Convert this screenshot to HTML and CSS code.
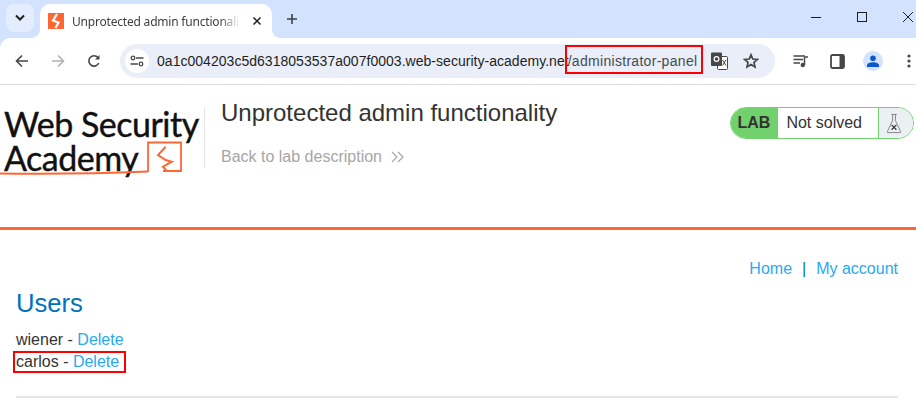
FILE: index.html
```html
<!DOCTYPE html>
<html>
<head>
  <meta charset="UTF-8" />
  <title>Unprotected admin functionality</title>
  <link rel="stylesheet" href="styles.css">
</head>
<body>

  <div class="tabstrip">
    <div class="tab-search">
      <svg width="12" height="8" viewBox="0 0 12 8"><path d="M2 1.500 6 5.500 10 1.500" fill="none" stroke="#1f1f1f" stroke-width="2"/></svg>
    </div>
    <div class="tab">
      <svg class="favicon" width="16" height="16" viewBox="0 0 16 16">
        <rect width="16" height="16" fill="#ff6633"/>
        <path d="M9 1 5 7.500 10.500 9.500 7.500 15" fill="none" stroke="#fff" stroke-width="2.200"/>
      </svg>
      <span class="tab-title">Unprotected admin functionality</span>
      <svg width="10" height="10" viewBox="0 0 10 10"><path d="M1.500 1.500 8.500 8.500M8.500 1.500 1.500 8.500" stroke="#1f1f1f" stroke-width="1.500"/></svg>
    </div>
    <svg class="new-tab" width="12" height="12" viewBox="0 0 12 12"><path d="M6 1V11M1 6H11" stroke="#3c4043" stroke-width="1.600"/></svg>
    <div class="window-buttons">
      <svg width="10" height="10" viewBox="0 0 10 10"><path d="M0 5.500H10" stroke="#1f1f1f"/></svg>
      <svg width="10" height="10" viewBox="0 0 10 10"><rect x="0.500" y="0.500" width="9" height="9" fill="none" stroke="#1f1f1f"/></svg>
      <svg width="10" height="10" viewBox="0 0 10 10"><path d="M0 0 10 10M10 0 0 10" stroke="#1f1f1f"/></svg>
    </div>
  </div>

  <div class="toolbar">
    <svg class="nav-icon" width="14" height="14" viewBox="0 0 14 14"><path d="M13 7H2M7 1.500 1.500 7 7 12.500" fill="none" stroke="#474747" stroke-width="1.600"/></svg>
    <svg class="nav-icon" width="14" height="14" viewBox="0 0 14 14"><path d="M1 7H12M7 1.500 12.500 7 7 12.500" fill="none" stroke="#b0b1b3" stroke-width="1.600"/></svg>
    <svg class="nav-icon" width="14" height="14" viewBox="0 0 14 14"><path d="M11.800 9A5.200 5.200 0 1 1 11 3.500" fill="none" stroke="#474747" stroke-width="1.600"/><path d="M12.500 1V5.500H8Z" fill="#474747"/></svg>

    <div class="omnibox">
      <span class="site-info">
        <svg width="14" height="12" viewBox="0 0 14 12"><circle cx="3" cy="3" r="1.800" fill="none" stroke="#474747" stroke-width="1.300"/><path d="M6 3H13.500M0.500 9H8" stroke="#474747" stroke-width="1.300"/><circle cx="11" cy="9" r="1.800" fill="none" stroke="#474747" stroke-width="1.300"/></svg>
      </span>
      <span class="url">0a1c004203c5d6318053537a007f0003.web-security-academy.net</span><span class="url-path">/administrator-panel</span>
      <svg class="translate" width="17" height="18" viewBox="0 0 17 18">
        <rect x="6.500" y="4.500" width="10" height="13" rx="1" fill="#fff" stroke="#474747"/>
        <rect x="0" y="0.500" width="11" height="13.500" rx="1" fill="#474747"/>
        <circle cx="5.500" cy="7" r="2.400" fill="none" stroke="#fff" stroke-width="1.200"/>
        <path d="M11.500 8 15 13.500M15 8 11.500 13.500" stroke="#474747"/>
      </svg>
      <svg class="star" width="16" height="16" viewBox="0 0 16 16"><path d="M8 1.800 9.800 6 14.500 6.400 11 9.400 12 14 8 11.600 4 14 5 9.400 1.500 6.400 6.200 6Z" fill="none" stroke="#474747" stroke-width="1.700"/></svg>
    </div>

    <div class="toolbar-right">
      <svg width="16" height="14" viewBox="0 0 16 14"><path d="M0.500 2H12M0.500 5.500H10M0.500 9H7" stroke="#474747" stroke-width="1.400"/><path d="M11.500 3V11" stroke="#474747" stroke-width="1.500"/><path d="M11.500 3H15" stroke="#474747" stroke-width="1.500"/><circle cx="9.800" cy="11" r="2.200" fill="#474747"/></svg>
      <svg width="15" height="15" viewBox="0 0 15 15"><rect x="1" y="1" width="13" height="13" rx="1.500" fill="none" stroke="#474747" stroke-width="1.800"/><rect x="9.500" y="1" width="4.500" height="13" fill="#474747"/></svg>
      <span class="avatar">
        <svg width="12" height="12" viewBox="0 0 12 12"><circle cx="6" cy="3.200" r="2.800" fill="#0b57d0"/><path d="M0 12V10.500C0 8.500 3 7.300 6 7.300S12 8.500 12 10.500V12Z" fill="#0b57d0"/></svg>
      </span>
      <svg width="4" height="14" viewBox="0 0 4 14"><circle cx="2" cy="2" r="1.600" fill="#474747"/><circle cx="2" cy="7" r="1.600" fill="#474747"/><circle cx="2" cy="12" r="1.600" fill="#474747"/></svg>
    </div>
  </div>

  <div class="lab-header">
    <div class="logo">
      <div class="logo-line">Web Security</div>
      <div class="logo-line">Academy</div>
      <svg class="logo-mark" width="200" height="36" viewBox="0 0 200 36">
        <path d="M0 33.500C40 34 100 33.500 148 31.500" fill="none" stroke="#ff6633" stroke-width="1.800"/>
        <path d="M148 32V2.500H181V31H163" fill="none" stroke="#ff6633" stroke-width="1.800"/>
        <path d="M165.700 6.700 158 15 165.700 20 171.700 21.700 163 26.700 166.700 31" fill="none" stroke="#ff6633" stroke-width="2"/>
      </svg>
    </div>
    <div class="lab-title">
      <h2>Unprotected admin functionality</h2>
      <a class="back-link" href="#">Back to lab description
        <svg width="13" height="12" viewBox="0 0 13 12"><path d="M1 1 6 6 1 11M7 1 12 6 7 11" fill="none" stroke="#a6a6a6" stroke-width="1.200"/></svg>
      </a>
    </div>
    <div class="lab-status">
      <span class="lab-label">LAB</span>
      <span class="lab-state">Not solved</span>
      <span class="lab-flask">
        <svg width="16" height="21" viewBox="0 0 16 22"><path d="M5 1.500H11M6.500 1.500V8L1 19.500C0.800 20 1 20.500 1.700 20.500H14.300C15 20.500 15.200 20 15 19.500L9.500 8V1.500" fill="none" stroke="#777" stroke-width="0.900"/><path d="M5.500 12.500 10.500 17.500M10.500 12.500 5.500 17.500" stroke="#333" stroke-width="1.300"/></svg>
      </span>
    </div>
  </div>

  <div class="content">
    <div class="top-links">
      <a href="#">Home</a><span class="sep">|</span><a href="#">My account</a>
    </div>
    <h1>Users</h1>
    <div class="user-row"><span>wiener - </span><a href="#">Delete</a></div>
    <div class="user-row marked"><span>carlos - </span><a href="#">Delete</a></div>
    <hr>
  </div>

</body>
</html>
```

FILE: styles.css
```css
html, body {
  margin: 0;
  height: 410px;
  overflow: hidden;
  background-color: white;
  font-family: "Liberation Sans", Arial, sans-serif;
  color: #333332;
}

a {
  color: #29a9f0;
  text-decoration: none;
}

/* browser chrome */
.tabstrip {
  display: flex;
  align-items: flex-end;
  height: 38px;
  background-color: #d3e3fd;
  box-sizing: border-box;
}

.tab-search {
  display: flex;
  align-items: center;
  justify-content: center;
  width: 28px;
  height: 28px;
  margin: 0 0 6px 6px;
  border-radius: 8px;
  background-color: #e4edfd;
}

.tab {
  position: relative;
  display: flex;
  align-items: center;
  width: 232px;
  height: 34px;
  margin-left: 6px;
  padding: 0 10px 0 8px;
  box-sizing: border-box;
  border-radius: 10px 10px 0 0;
  background-color: white;
}

.tab::before,
.tab::after {
  content: "";
  position: absolute;
  bottom: 0;
  width: 8px;
  height: 8px;
}

.tab::before {
  right: 100%;
  background: radial-gradient(circle at 0 0, transparent 7.500px, white 8px);
}

.tab::after {
  left: 100%;
  background: radial-gradient(circle at 100% 0, transparent 7.500px, white 8px);
}

.favicon {
  flex: none;
}

.tab-title {
  flex: 1;
  margin: 0 12px 0 8px;
  overflow: hidden;
  white-space: nowrap;
  font-family: "Noto Sans", "Liberation Sans", sans-serif;
  font-size: 12px;
  letter-spacing: -0.2px;
  color: #3c4043;
  -webkit-mask-image: linear-gradient(to right, black 88%, transparent);
  mask-image: linear-gradient(to right, black 88%, transparent);
}

.new-tab {
  margin: 0 0 13px 14px;
}

.window-buttons {
  display: flex;
  gap: 36px;
  margin: 0 3px 16px auto;
}

.toolbar {
  position: relative;
  display: flex;
  align-items: center;
  height: 47px;
  box-sizing: border-box;
  padding: 0 9px 0 15px;
  background-color: white;
  border-bottom: 1px solid #dcdcdc;
}

.toolbar::before {
  content: "";
  position: absolute;
  left: 0;
  top: 0;
  width: 10px;
  height: 10px;
  background: radial-gradient(circle at 100% 100%, transparent 9.500px, #d3e3fd 10px);
}

.nav-icon {
  flex: none;
  margin-right: 22px;
}

.nav-icon:nth-of-type(3) {
  margin-right: 19px;
}

.omnibox {
  display: flex;
  flex: none;
  align-items: center;
  width: 655px;
  height: 34px;
  box-sizing: border-box;
  padding-left: 5px;
  border-radius: 17px;
  background-color: #e9eef8;
  font-size: 14px;
  white-space: nowrap;
}

.site-info {
  display: flex;
  flex: none;
  align-items: center;
  justify-content: center;
  width: 24px;
  height: 24px;
  margin-right: 8px;
  border-radius: 50%;
  background-color: white;
}

.url {
  color: #1f1f1f;
  letter-spacing: 0.03px;
}

.url-path {
  height: 29px;
  margin: 0 0 4px -4px;
  padding: 0 4px 0 1px;
  box-sizing: border-box;
  border: 2px solid #f00;
  line-height: 29px;
  letter-spacing: 0.3px;
  color: #474a4f;
}

.translate {
  margin-left: 8px;
}

.star {
  margin-left: 15px;
}

.toolbar-right {
  display: flex;
  align-items: center;
  gap: 21px;
  margin-left: 18px;
}

.avatar {
  display: flex;
  align-items: center;
  justify-content: center;
  width: 20px;
  height: 20px;
  margin: 0 3px 0 -3px;
  border-radius: 50%;
  background-color: #d3e3fd;
}

/* lab banner */
.lab-header {
  display: flex;
  height: 145px;
  box-sizing: border-box;
  border-bottom: 3px solid #ff6633;
}

.logo {
  position: relative;
  flex: none;
  width: 204px;
  height: 61px;
  margin-top: 22px;
  border-right: 1px solid #e6e6e6;
  font-family: Lato, "Liberation Sans", sans-serif;
  font-size: 34px;
  line-height: 34px;
  letter-spacing: -0.5px;
  -webkit-text-stroke: 0.4px #111;
  color: #111;
}

.logo-line {
  padding-left: 4px;
  white-space: nowrap;
}

.logo-mark {
  position: absolute;
  left: 0;
  top: 33px;
}

.lab-title {
  margin-left: 16px;
  margin-top: 13px;
}

.lab-title h2 {
  margin: 0;
  font-size: 24px;
  font-weight: normal;
  line-height: 30px;
  color: #333332;
}

.back-link {
  display: flex;
  align-items: center;
  gap: 9px;
  margin-top: 19px;
  font-size: 16px;
  line-height: 20px;
  color: #a6a6a6;
}

.lab-status {
  display: flex;
  align-items: stretch;
  height: 32px;
  box-sizing: border-box;
  margin: 22px 2px 0 auto;
  overflow: hidden;
  border: 1px solid #70d16d;
  border-radius: 16px;
  font-size: 16px;
}

.lab-label {
  display: flex;
  align-items: center;
  padding: 0 8px 0 7px;
  background-color: #70d16d;
  font-weight: bold;
}

.lab-state {
  display: flex;
  align-items: center;
  padding: 0 16px 0 8px;
  border-right: 1px solid #70d16d;
}

.lab-flask {
  display: flex;
  align-items: center;
  justify-content: center;
  width: 34px;
  box-sizing: border-box;
  padding-right: 4px;
  background-color: #ebf0f2;
}

/* page body */
.content {
  padding: 29px 18px 0 16px;
  font-size: 16px;
}

.top-links {
  display: flex;
  justify-content: flex-end;
  line-height: 20px;
}

.sep {
  margin: 0 10px;
  color: #0071bc;
}

h1 {
  margin: 9px 0 11px;
  font-size: 25.600px;
  font-weight: normal;
  line-height: 30px;
  color: #0071bc;
}

.user-row {
  height: 22px;
  line-height: 22px;
}

.user-row.marked {
  width: fit-content;
  margin-left: -3px;
  padding: 0 5px 0 1px;
  box-sizing: border-box;
  border: 2px solid #f00;
  line-height: 18px;
}

hr {
  height: 2px;
  margin: 23px 0 0;
  border: none;
  background-color: #e6e6e6;
}
```
